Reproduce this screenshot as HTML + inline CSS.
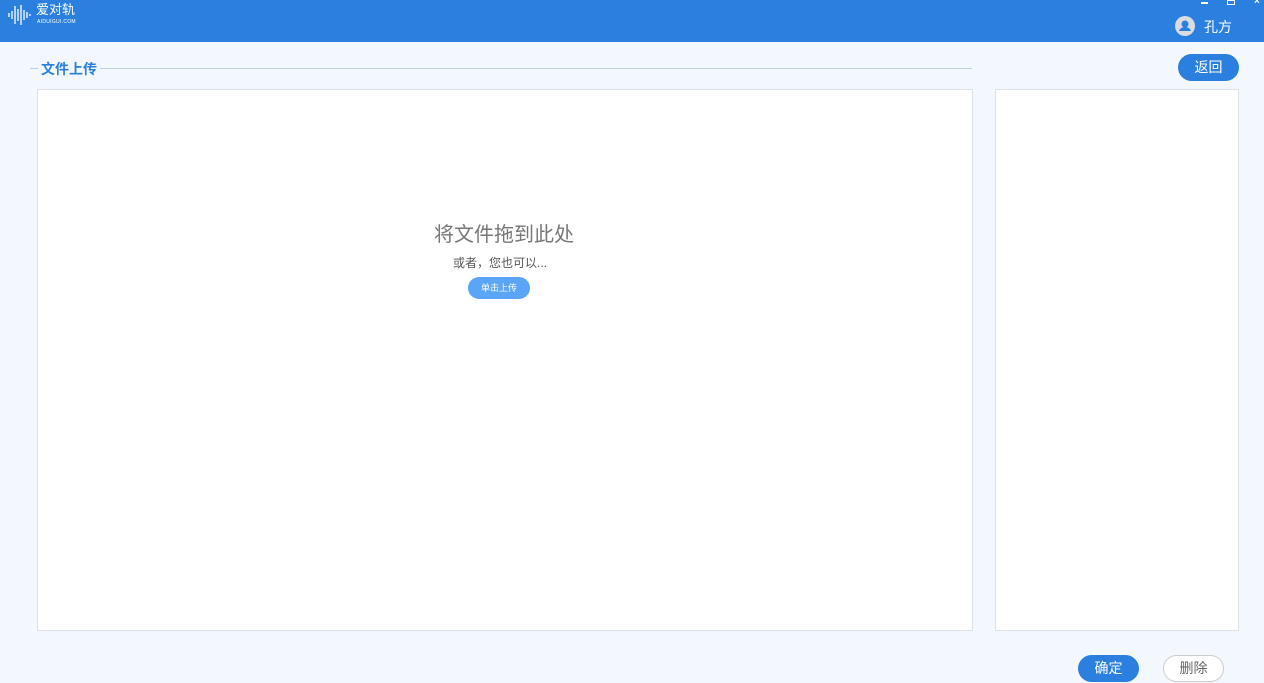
<!DOCTYPE html>
<html><head><meta charset="utf-8"><style>
*{margin:0;padding:0;box-sizing:border-box}
body{width:1264px;height:683px;background:#f3f8fe;font-family:"Liberation Sans","Noto Sans CJK SC",sans-serif;position:relative;overflow:hidden}
.top{position:absolute;left:0;top:0;width:1264px;height:42px;background:#2b7fdf}
.abs{position:absolute}
.btn{position:absolute;border-radius:14px;text-align:center;font-size:14px}
</style></head><body>
<div class="top">
<svg class="abs" style="left:7px;top:4px" width="28" height="22" viewBox="0 0 28 22" stroke="#fff" stroke-width="1.3" fill="none"><path d="M2 9v4M5 7v8M8 2v18M11 5v12M14 1v20M17 6v10M20 8v6M23 10v2"/></svg>
<div class="abs" style="left:36px;top:2px;color:#fff;font-size:13px;line-height:16px">爱对轨</div>
<div class="abs" style="left:37px;top:19px;color:#fff;font-size:5px;line-height:6px;letter-spacing:0.3px">AIDUIGUI.COM</div>
<div class="abs" style="left:1201px;top:2px;width:7px;height:1.5px;background:#fff"></div>
<div class="abs" style="left:1227px;top:0px;width:8px;height:5px;border:1.5px solid #fff"></div>
<div class="abs" style="left:1254px;top:-4px;color:#fff;font-size:10px;font-weight:bold">×</div>
<svg class="abs" style="left:1175px;top:16px" width="20" height="20" viewBox="0 0 20 20"><circle cx="10" cy="10" r="10" fill="#d9dde3"/><circle cx="10" cy="8" r="3.5" fill="#2b7fdf"/><path d="M4 15c1-3 3.5-4 6-4s5 1 6 4z" fill="#2b7fdf"/></svg>
<div class="abs" style="left:1204px;top:17px;color:#fff;font-size:14px">孔方</div>
</div>
<div class="abs" style="left:30px;top:68px;width:8px;height:1px;background:#b9d0ec"></div>
<div class="abs" style="left:41px;top:59px;color:#2b7fdf;font-size:14px;font-weight:bold">文件上传</div>
<div class="abs" style="left:100px;top:68px;width:872px;height:1px;background:#b9d0ec"></div>
<div class="btn" style="left:1178px;top:54px;width:61px;height:27px;background:#2b7fdf;color:#fff;line-height:27px">返回</div>
<div class="abs" style="left:37px;top:89px;width:936px;height:542px;background:#fff;border:1px solid #dfe3e8"></div>
<div class="abs" style="left:995px;top:89px;width:244px;height:542px;background:#fff;border:1px solid #dfe3e8"></div>
<div class="abs" style="left:36px;top:218px;width:936px;text-align:center;color:#777;font-size:20px">将文件拖到此处</div>
<div class="abs" style="left:37px;top:254px;width:926px;text-align:center;color:#555;font-size:12px">或者，您也可以...</div>
<div class="btn" style="left:468px;top:277px;width:62px;height:22px;background:#5aa5f5;color:#fff;font-size:9px;line-height:22px;border-radius:11px">单击上传</div>
<div class="btn" style="left:1078px;top:655px;width:61px;height:27px;background:#2b7fdf;color:#fff;line-height:27px">确定</div>
<div class="btn" style="left:1163px;top:655px;width:61px;height:27px;background:#fff;border:1px solid #ccc;color:#666;line-height:25px">删除</div>
</body></html>
